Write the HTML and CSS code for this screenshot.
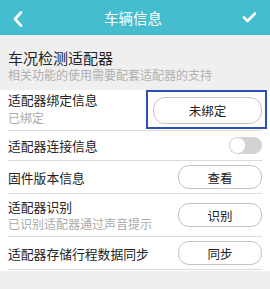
FILE: index.html
```html
<html>
<head>
<meta name="viewport" content="width=device-width, initial-scale=1.0">
<link rel="stylesheet" href="styles.css">
</head>
<body>
<div id="header">
<svg class="icon" width="30" height="35" viewBox="0 0 30 35"><path d="M21 12.5 L15 19 L21 25.5" fill="none" stroke="#fff" stroke-width="2.6" stroke-linecap="round" stroke-linejoin="round"/></svg>
<div id="title">车辆信息</div>
<svg class="icon" width="30" height="35" viewBox="0 0 30 35"><path d="M8 17.5 L11.5 21 L19 13.5" fill="none" stroke="#fff" stroke-width="2.6" stroke-linecap="round" stroke-linejoin="round"/></svg>
</div>

<div id="section">
<div class="sectitle">车况检测适配器</div>
<div class="secsub">相关功能的使用需要配套适配器的支持</div>
</div>

<div id="list">
<div class="row h40">
<div class="texts"><div class="label">适配器绑定信息</div><div class="sub">已绑定</div></div>
<button class="btn wide">未绑定</button>
<div class="mark"></div>
</div>
<div class="row h28">
<div class="label">适配器连接信息</div>
<div class="toggle"><div class="knob"></div></div>
</div>
<div class="row h32">
<div class="label">固件版本信息</div>
<button class="btn">查看</button>
</div>
<div class="row h42">
<div class="texts"><div class="label">适配器识别</div><div class="sub">已识别适配器通过声音提示</div></div>
<button class="btn">识别</button>
</div>
<div class="row h32">
<div class="label">适配器存储行程数据同步</div>
<button class="btn">同步</button>
</div>
</div>
</body>
</html>
```

FILE: styles.css
```css
* {
    box-sizing: border-box;
}

body{
margin:0;
background:#efeff0;
font-family:"Noto Sans CJK SC","Noto Sans",sans-serif;
color:#222;
}

#header{
height:35px;
background:#45bdcf;
display:flex;
align-items:center;
justify-content:space-between;
padding:0 4px 0 0;
}

.icon{
display:block;
}

#title{
color:white;
font-size:14.5px;
line-height:18px;
}

#section{
padding:14px 8px 7px 8px;
}

.sectitle{
font-size:15px;
line-height:18px;
color:#222;
}

.secsub{
font-size:12px;
line-height:16px;
color:#b0b0b0;
}

#list{
background:white;
padding:0 8px;
border-bottom:1px solid #fff;
}

.row{
position:relative;
display:flex;
align-items:center;
justify-content:space-between;
border-bottom:1px solid #dcdcdc;
}

.h40{height:41px;padding-bottom:3px;}
.h28{height:30px;}
.h32{height:33px;}
.h42{height:43px;}

.label{
font-size:12.8px;
line-height:17px;
color:#222;
}

.h40 .label{
line-height:18px;
}

.sub{
font-size:12px;
line-height:17px;
color:#aaa;
}

.btn{
width:84px;
height:24px;
background:white;
border:1px solid #c4c4c4;
border-radius:11px;
font-family:"Noto Sans CJK SC","Noto Sans",sans-serif;
font-size:12.5px;
color:#222;
padding:0;
}

.btn.wide{
width:109px;
height:27px;
margin-top:3px;
border-radius:12px;
}

.mark{
position:absolute;
left:138px;
top:0;
width:121px;
height:39px;
border:2px solid #2b50b8;
}

.toggle{
width:33px;
height:17px;
border-radius:9px;
background:#d2d2d2;
position:relative;
}

.knob{
position:absolute;
left:0;
top:0;
width:17px;
height:17px;
border-radius:50%;
background:white;
border:1px solid #d6d6d6;
}
```
